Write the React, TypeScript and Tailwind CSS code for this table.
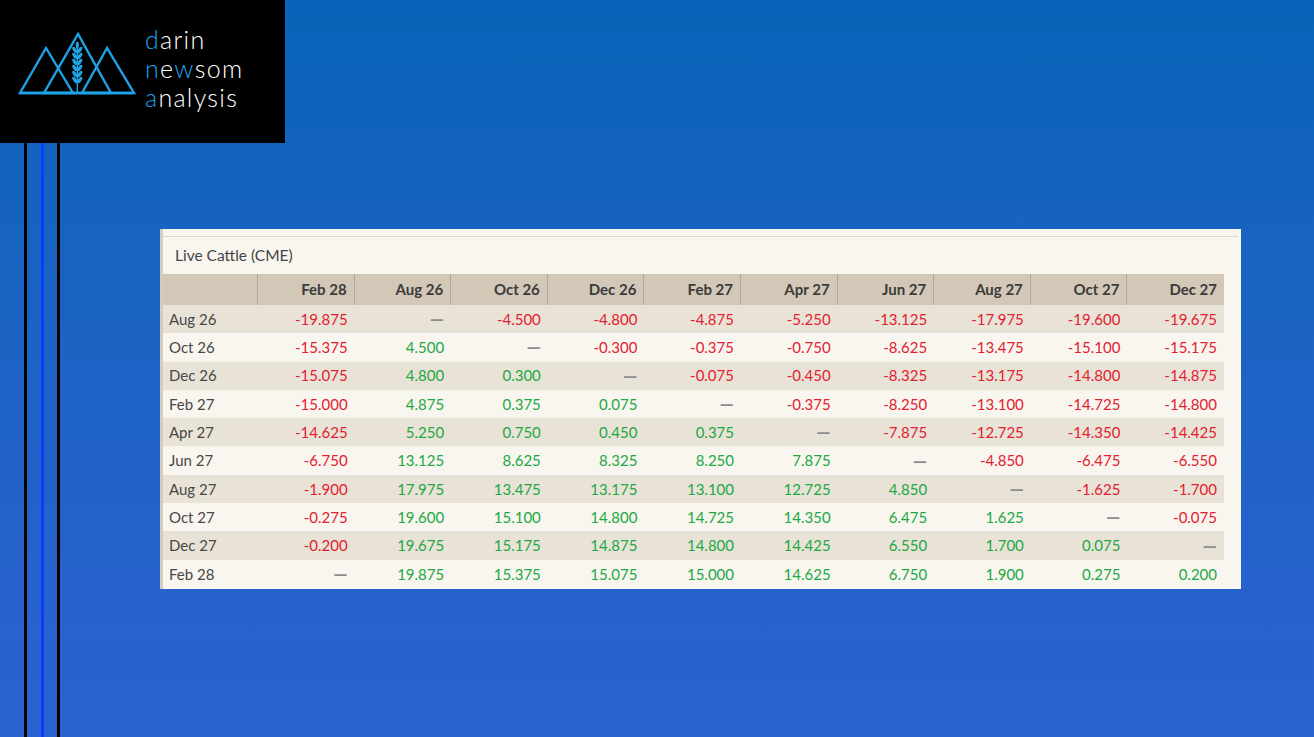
import React from "react";

const cols = ["Feb 28", "Aug 26", "Oct 26", "Dec 26", "Feb 27", "Apr 27", "Jun 27", "Aug 27", "Oct 27", "Dec 27"];
const rows: [string, (string | null)[]][] = [
  ["Aug 26", ["-19.875", null, "-4.500", "-4.800", "-4.875", "-5.250", "-13.125", "-17.975", "-19.600", "-19.675"]],
  ["Oct 26", ["-15.375", "4.500", null, "-0.300", "-0.375", "-0.750", "-8.625", "-13.475", "-15.100", "-15.175"]],
  ["Dec 26", ["-15.075", "4.800", "0.300", null, "-0.075", "-0.450", "-8.325", "-13.175", "-14.800", "-14.875"]],
  ["Feb 27", ["-15.000", "4.875", "0.375", "0.075", null, "-0.375", "-8.250", "-13.100", "-14.725", "-14.800"]],
  ["Apr 27", ["-14.625", "5.250", "0.750", "0.450", "0.375", null, "-7.875", "-12.725", "-14.350", "-14.425"]],
  ["Jun 27", ["-6.750", "13.125", "8.625", "8.325", "8.250", "7.875", null, "-4.850", "-6.475", "-6.550"]],
  ["Aug 27", ["-1.900", "17.975", "13.475", "13.175", "13.100", "12.725", "4.850", null, "-1.625", "-1.700"]],
  ["Oct 27", ["-0.275", "19.600", "15.100", "14.800", "14.725", "14.350", "6.475", "1.625", null, "-0.075"]],
  ["Dec 27", ["-0.200", "19.675", "15.175", "14.875", "14.800", "14.425", "6.550", "1.700", "0.075", null]],
  ["Feb 28", [null, "19.875", "15.375", "15.075", "15.000", "14.625", "6.750", "1.900", "0.275", "0.200"]],
];

function Logo() {
  const c = "#1ea3e6";
  const leaves = [50, 56, 62, 68, 74, 80];
  return (
    <svg width="140" height="143" viewBox="0 0 140 143" className="shrink-0">
      <g fill="none" stroke={c} strokeWidth="2.4" strokeLinejoin="miter">
        <polygon points="46,48 20,93 73,93" />
        <polygon points="78,34 44,93 111,93" />
        <polygon points="107,48 82,93 134,93" />
        <line x1="20" y1="93" x2="134" y2="93" />
      </g>
      <g fill={c}>
        <rect x="76.6" y="46" width="1.4" height="46" />
        <ellipse cx="77.3" cy="45" rx="1.6" ry="3.5" />
        {leaves.map((y) => (
          <g key={y}>
            <ellipse cx="74.8" cy={y} rx="1.7" ry="3.6" transform={`rotate(-35 74.8 ${y})`} />
            <ellipse cx="79.8" cy={y} rx="1.7" ry="3.6" transform={`rotate(35 79.8 ${y})`} />
          </g>
        ))}
      </g>
    </svg>
  );
}

export default function App() {
  const blue = "text-[#1ea3e6]";
  return (
    <div
      className="h-screen w-full flex flex-col overflow-hidden bg-gradient-to-b from-[#0663b8] to-[#2b62d1]"
      style={{ fontFamily: "Lato, 'Open Sans', sans-serif" }}
    >
      <div className="w-[285px] h-[143px] bg-black flex items-start shrink-0">
        <Logo />
        <div
          className="mt-[25px] ml-[5px] flex flex-col text-white text-[25px] leading-[29px] font-light tracking-[1.3px]"
          style={{ fontFamily: "Lato, 'Open Sans', sans-serif" }}
        >
          <div className="h-[29px]"><span className={blue}>d</span>arin</div>
          <div className="h-[29px]"><span className={blue}>n</span>e<span className={blue}>w</span>som</div>
          <div className="h-[29px]"><span className={blue}>a</span>nalysis</div>
        </div>
      </div>
      <div className="flex flex-1 items-stretch">
        <div className="ml-[24px] w-[3px] bg-black" />
        <div className="ml-[14px] w-[3px] bg-[#0a3cff]" />
        <div className="ml-[13px] w-[3px] bg-black" />
        <div className="ml-[100px] mt-[86px] self-start w-[1081px] h-[360px] bg-[#f9f6f0] border-l-[3px] border-[#d3ccbf] flex flex-col">
          <div className="mt-[7px] h-[1px] bg-[#dcd8d0] mr-[3px]" />
          <div className="h-[37px] flex items-center pl-[12px] text-[15.5px] text-[#444]">Live Cattle (CME)</div>
          <div className="w-[1061px] grid grid-cols-[95px_repeat(10,1fr)]">
            <div className="h-[31px] bg-[#d3c8b7] border-r border-[#b2a897]" />
            {cols.map((c, i) => (
              <div
                key={c}
                className={`h-[31px] bg-[#d3c8b7] flex items-center justify-end pr-[7px] font-bold text-[15px] text-[#3b3b3b] ${i < cols.length - 1 ? "border-r border-[#b2a897]" : ""}`}
              >
                {c}
              </div>
            ))}
            {rows.map(([label, vals], ri) => {
              const bg = ri % 2 === 0 ? "bg-[#e9e3d7]" : "bg-[#f9f6f0]";
              return (
                <React.Fragment key={label}>
                  <div className={`h-[28.3px] ${bg} flex items-center pl-[6px] text-[15px] text-[#474747]`}>{label}</div>
                  {vals.map((v, ci) => (
                    <div key={ci} className={`h-[28.3px] ${bg} flex items-center justify-end pr-[7px] text-[15px]`}>
                      {v === null ? (
                        <span className="text-[#8c8c8c] text-[18px] leading-[18px] font-bold">—</span>
                      ) : (
                        <span className={v.startsWith("-") ? "text-[#e3202f]" : "text-[#21a843]"}>{v}</span>
                      )}
                    </div>
                  ))}
                </React.Fragment>
              );
            })}
          </div>
        </div>
      </div>
    </div>
  );
}
